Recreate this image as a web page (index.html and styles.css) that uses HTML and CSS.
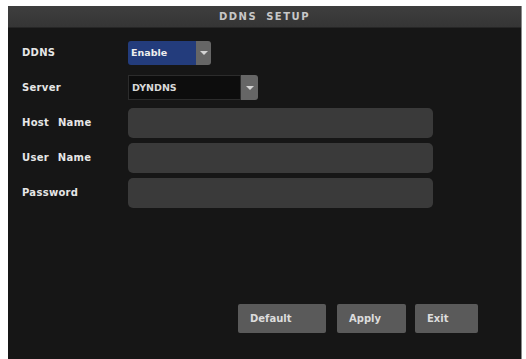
FILE: index.html
```html
<!DOCTYPE html>
<html>
<head>
<meta charset="utf-8">
<link rel="stylesheet" href="styles.css">
</head>
<body>
<div class="panel">
  <div class="titlebar">DDNS SETUP</div>
  <div class="form">
    <div class="row">
      <div class="label">DDNS</div>
      <div class="select enable">
        <div class="value">Enable</div>
        <div class="arrow"><span class="tri"></span></div>
      </div>
    </div>
    <div class="row">
      <div class="label">Server</div>
      <div class="select server">
        <div class="value">DYNDNS</div>
        <div class="arrow"><span class="tri"></span></div>
      </div>
    </div>
    <div class="row">
      <div class="label">Host Name</div>
      <div class="field"></div>
    </div>
    <div class="row">
      <div class="label">User Name</div>
      <div class="field"></div>
    </div>
    <div class="row">
      <div class="label">Password</div>
      <div class="field"></div>
    </div>
  </div>
  <div class="buttons">
    <div class="btn b-default">Default</div>
    <div class="btn b-apply">Apply</div>
    <div class="btn b-exit">Exit</div>
  </div>
</div>
</body>
</html>
```
FILE: styles.css
```css
html, body {
  margin: 0;
  padding: 0;
  background: #ffffff;
}
body {
  font-family: "DejaVu Sans", "Liberation Sans", sans-serif;
  font-weight: bold;
  font-size: 10px;
}
.panel {
  margin: 6px 0 0 8px;
  width: 513px;
  height: 353px;
  background: #161616;
  display: flex;
  flex-direction: column;
  box-shadow: 1px 0 0 #8a8a8a;
}
.titlebar {
  height: 22px;
  line-height: 22px;
  text-align: center;
  color: #c8c8c8;
  letter-spacing: 1.5px;
  word-spacing: 4px;
  font-size: 10px;
  background: linear-gradient(#3e3e3e, #353535);
  border-bottom: 1px solid #262626;
  box-sizing: border-box;
}
.form {
  padding-top: 7px;
  padding-left: 14px;
  display: flex;
  flex-direction: column;
}
.row {
  height: 35px;
  display: flex;
  align-items: center;
}
.label {
  width: 106px;
  color: #e6e6e6;
  font-size: 10px;
  word-spacing: 5px;
  letter-spacing: 0.3px;
}
.select {
  display: flex;
  height: 24px;
}
.select .value {
  color: #eeeeee;
  font-size: 9.5px;
  line-height: 24px;
  padding-left: 3px;
  box-sizing: border-box;
}
.enable .value {
  width: 68px;
  background: #233c7c;
  border-radius: 3px 0 0 3px;
}
.server {
  height: 25px;
}
.server .value {
  width: 113px;
  background: #0d0d0d;
  border: 1px solid #2c2c2c;
  line-height: 23px;
  color: #d8d8d8;
}
.arrow {
  width: 15px;
  background: #666666;
  border-radius: 0 3px 3px 0;
  display: flex;
  align-items: center;
  justify-content: center;
}
.server .arrow {
  width: 17px;
}
.tri {
  width: 0;
  height: 0;
  border-left: 4px solid transparent;
  border-right: 4px solid transparent;
  border-top: 4px solid #d4d4d4;
}
.field {
  width: 305px;
  height: 30px;
  background: #3a3a3a;
  border-radius: 5px;
}
.buttons {
  margin-top: auto;
  margin-bottom: 26px;
  display: flex;
  padding-left: 230px;
}
.btn {
  height: 29px;
  line-height: 29px;
  background: #5a5a5a;
  color: #dcdcdc;
  font-size: 10px;
  padding-left: 12px;
  box-sizing: border-box;
  border-radius: 2px;
}
.b-default { width: 88px; }
.b-apply { width: 69px; margin-left: 11px; }
.b-exit { width: 63px; margin-left: 9px; }
```
